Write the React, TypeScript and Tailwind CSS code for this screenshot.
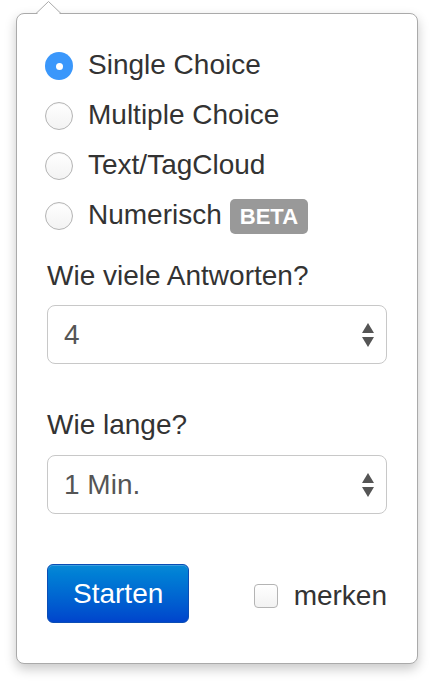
import React, { useState } from 'react'

const options = ['Single Choice', 'Multiple Choice', 'Text/TagCloud', 'Numerisch']

const SelectArrows = () => (
  <svg width="12" height="24" viewBox="0 0 12 24" className="shrink-0">
    <path d="M6 0 L12 10 L0 10 Z" fill="#555" />
    <path d="M0 14 L12 14 L6 24 Z" fill="#555" />
  </svg>
)

const FakeSelect = ({ value }: { value: string }) => (
  <div className="flex h-[59px] w-full items-center justify-between rounded-[8px] border border-[#c8c8c8] bg-white pl-[16px] pr-[12px]">
    <span className="text-[28px] leading-[40px] text-[#555]">{value}</span>
    <SelectArrows />
  </div>
)

const Radio = ({ checked }: { checked: boolean }) =>
  checked ? (
    <div className="flex h-[28px] w-[28px] shrink-0 items-center justify-center rounded-full bg-[#3a97fb]">
      <div className="h-[7px] w-[7px] rounded-full bg-white" />
    </div>
  ) : (
    <div className="h-[28px] w-[28px] shrink-0 rounded-full border border-[#b4b4b4] bg-linear-to-b from-white to-[#f3f3f3] shadow-[inset_0_1px_1px_rgba(0,0,0,0.04)]" />
  )

export default function App() {
  const [selected] = useState(0)

  return (
    <div className="min-h-[691px] bg-white pt-[13px] font-['Liberation_Sans',Arial,sans-serif] text-[#333]">
      <div className="relative ml-[16px] w-[402px] rounded-[8px] border border-[#aaa] bg-white px-[30px] pt-[27px] pb-[40px] shadow-[0_5px_12px_rgba(0,0,0,0.22)]">
        {/* Pfeil */}
        <svg
          width="26"
          height="14"
          viewBox="0 0 26 14"
          className="absolute top-[-13px] left-[19px]"
        >
          <path d="M0 14 L12.5 1 L25 14 Z" fill="#fff" />
          <polyline
            points="0,12.5 12.5,0.5 25,12.5"
            fill="none"
            stroke="#aaa"
            strokeWidth="1"
          />
        </svg>

        {/* Fragetyp */}
        <div className="-ml-[2px] flex flex-col">
          {options.map((label, i) => (
            <div key={label} className="flex h-[50px] items-center">
              <Radio checked={i === selected} />
              <span className="ml-[15px] pb-[3px] text-[28px] leading-[40px]">
                {label}
              </span>
              {label === 'Numerisch' && (
                <span className="ml-[8px] flex h-[35px] items-center rounded-[5px] bg-[#999] px-[10px] text-[22px] font-bold text-white">
                  BETA
                </span>
              )}
            </div>
          ))}
        </div>

        <div className="mt-[15px] text-[28px] leading-[40px]">Wie viele Antworten?</div>
        <div className="mt-[9px]">
          <FakeSelect value="4" />
        </div>

        <div className="mt-[41px] text-[28px] leading-[40px]">Wie lange?</div>
        <div className="mt-[10px]">
          <FakeSelect value="1 Min." />
        </div>

        <div className="mt-[50px] flex items-center justify-between">
          <button className="h-[59px] rounded-[6px] border border-[#0a4db5] bg-linear-to-b from-[#0a89d6] to-[#0044cc] px-[25px] text-[28px] text-white shadow-[inset_0_1px_0_rgba(255,255,255,0.2)]">
            Starten
          </button>
          <label className="flex items-center pt-[5px]">
            <span className="h-[24px] w-[24px] rounded-[4px] border border-[#b4b4b4] bg-linear-to-b from-white to-[#f2f2f2]" />
            <span className="ml-[16px] text-[28px] leading-[40px]">merken</span>
          </label>
        </div>
      </div>
    </div>
  )
}
